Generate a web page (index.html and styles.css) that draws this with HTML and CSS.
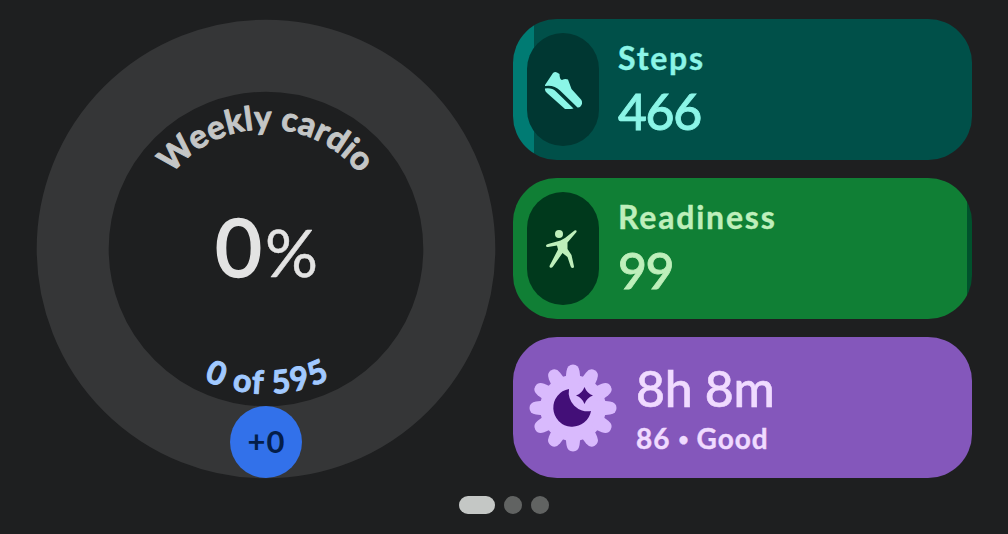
FILE: index.html
```html
<!DOCTYPE html>
<html lang="en">
<head>
<meta charset="UTF-8">
<meta name="viewport" content="width=device-width, initial-scale=1.0">
<title>Today</title>
<link rel="stylesheet" href="styles.css">
</head>
<body>

<div class="summary">

<svg class="ring" width="460" height="460" viewBox="-230 -230 460 460">
    <defs>
        <path id="topArc" d="M-93.900 -74.700A120 120 0 0 1 94.500 -74"/>
        <path id="bottomArc" d="M-62 131A145 145 0 0 0 66 129"/>
    </defs>
    <circle class="track" r="193.300"/>
    <text class="title"><textPath href="#topArc" textLength="215">Weekly cardio</textPath></text>
    <text class="percent" x="-51" y="28" textLength="47" lengthAdjust="spacingAndGlyphs">0</text>
    <text class="sign" x="-1" y="28" textLength="53" lengthAdjust="spacingAndGlyphs">%</text>
    <text class="goal"><textPath href="#bottomArc" textLength="130">0 of 595</textPath></text>
    <circle class="today" cy="193" r="36"/>
    <text class="gain" x="0" y="204" textLength="37">+0</text>
</svg>

<div class="cards">
    <div class="card steps">
        <div class="pill">
            <svg width="38" height="38" viewBox="0 0 38 38">
                <path d="M1 14L9 2Q11 .5 13 1.500L15.500 3Q15.500 8.500 18 9Q21 7.500 24 8.500L27.500 18L37 28.500Q39 31.500 37.500 34Q36 37 33.500 36.500L16 19.500Q10 13.500 1 15Z"/>
                <path d="M1 17.500Q8 16.500 12 20.500L29.500 37.500Q26 38.500 21 38L3 22Q.5 20 1 17.500Z"/>
            </svg>
        </div>
        <div class="info">
            <div class="label">Steps</div>
            <div class="value">466</div>
        </div>
    </div>
    <div class="card readiness">
        <div class="pill">
            <svg width="34" height="40" viewBox="0 0 34 40">
                <circle cx="13" cy="5" r="4"/>
                <path d="M28.500 1.500Q31 .5 30.500 3L21.500 13.500V20L25.500 26L28 37.500Q28 39 26.500 39Q25 39 24.500 37L21.500 28L16.500 24L7 37.500Q5.500 39.500 4 38.500Q3 37.500 4 36L12 20.500L11 16.500L2 18Q0 18.500 0 16.500Q0 15.500 2 15L14.500 11.500L19 9Z"/>
            </svg>
        </div>
        <div class="info">
            <div class="label">Readiness</div>
            <div class="value">99</div>
        </div>
    </div>
    <div class="card sleep">
        <svg class="flower" width="88" height="88" viewBox="-44 -44 88 88">
            <g class="petals">
                <circle r="33"/>
                <path id="petal" d="M-8 -24L-6.500 -37Q-5.500 -43.500 0 -43.500Q5.500 -43.500 6.500 -37L8 -24Z"/>
                <use href="#petal" transform="rotate(30)"/>
                <use href="#petal" transform="rotate(60)"/>
                <use href="#petal" transform="rotate(90)"/>
                <use href="#petal" transform="rotate(120)"/>
                <use href="#petal" transform="rotate(150)"/>
                <use href="#petal" transform="rotate(180)"/>
                <use href="#petal" transform="rotate(210)"/>
                <use href="#petal" transform="rotate(240)"/>
                <use href="#petal" transform="rotate(270)"/>
                <use href="#petal" transform="rotate(300)"/>
                <use href="#petal" transform="rotate(330)"/>
            </g>
            <path class="moon" d="M-4 -19A19 19 0 1 0 18 3A19 19 0 0 1 -4 -19Z"/>
            <path class="moon" d="M11.500 -21Q14 -14.500 20 -12.500Q14 -10.500 11.500 -4Q9 -10.500 3 -12.500Q9 -14.500 11.500 -21Z"/>
        </svg>
        <div class="info">
            <div class="value">8h 8m</div>
            <div class="label">86<span class="bullet">•</span>Good</div>
        </div>
    </div>
</div>

</div>

<div class="dots">
    <span class="dot active"></span>
    <span class="dot"></span>
    <span class="dot"></span>
</div>

</body>
</html>
```

FILE: styles.css
```css
* {
    box-sizing: border-box;
}
body {
    font-family: Lato, sans-serif;
    background-color: #1e1f20;
    margin: 0;
    height: 534px;
    padding-top: 19px;
    overflow: hidden;
}
.summary {
    display: flex;
    gap: 17px;
    padding-left: 36px;
}
.ring text {
    stroke-linejoin: round;
}
.track {
    fill: none;
    stroke: #353637;
    stroke-width: 72px;
}
.title {
    font-size: 33px;
    font-weight: 700;
    fill: #c4c6c6;
    stroke: #c4c6c6;
    stroke-width: 1px;
}
.percent {
    font-size: 82px;
    font-weight: 500;
    fill: #e3e3e3;
    stroke: #e3e3e3;
    stroke-width: 1.5px;
}
.sign {
    font-size: 66px;
    fill: #e3e3e3;
    stroke: #e3e3e3;
    stroke-width: .5px;
}
.goal {
    font-size: 32px;
    font-weight: 700;
    fill: #a1c9ff;
    stroke: #a1c9ff;
    stroke-width: 1px;
}
.today {
    fill: #3271ea;
}
.gain {
    font-size: 31px;
    font-weight: 700;
    text-anchor: middle;
    fill: #041e49;
}
.cards {
    display: flex;
    flex-direction: column;
    gap: 18px;
}
.card {
    display: flex;
    width: 459px;
    height: 141px;
    padding: 14px;
    border-radius: 44px;
}
.pill {
    display: flex;
    align-items: center;
    justify-content: center;
    width: 72px;
    height: 113px;
    border-radius: 36px;
}
.info {
    margin-left: 19px;
    white-space: nowrap;
}
.label {
    font-size: 32px;
    line-height: 38px;
    font-weight: 700;
    letter-spacing: 1.8px;
    margin-top: 6px;
    -webkit-text-stroke: .4px;
}
.value {
    font-size: 50px;
    line-height: 60px;
    font-weight: 500;
    letter-spacing: -1.4px;
    margin-top: 4px;
    -webkit-text-stroke: .8px;
}
.steps {
    background: linear-gradient(to right, #007b73 21px, #005049 21px);
    color: #8bf5e7;
    fill: #8bf5e7;
}
.readiness {
    background: linear-gradient(to right, #107f35 454px, #00522c 454px);
    color: #beefbb;
    fill: #beefbb;
}
.steps .pill {
    background-color: #003732;
}
.readiness .pill {
    background-color: #00391c;
}
.sleep {
    background-color: #8457bb;
    color: #f0dbff;
}
.flower {
    margin: 13px 0 0 2px;
}
.petals {
    fill: #d9bafd;
}
.moon {
    fill: #430f78;
}
.sleep .value {
    letter-spacing: -.3px;
    margin-top: 7px;
    -webkit-text-stroke: .6px;
}
.sleep .label {
    font-size: 28px;
    line-height: 34px;
    letter-spacing: 1px;
    margin-top: 3px;
}
.bullet {
    display: inline-block;
    width: 26px;
    font-size: 18px;
    line-height: 20px;
    letter-spacing: 0;
    text-align: center;
    vertical-align: 3px;
}
.dots {
    display: flex;
    justify-content: center;
    gap: 9px;
    margin-top: 17px;
}
.dot {
    width: 18px;
    height: 18px;
    border-radius: 9px;
    background-color: #616362;
}
.dot.active {
    width: 36px;
    background-color: #c4c7c5;
}
```
